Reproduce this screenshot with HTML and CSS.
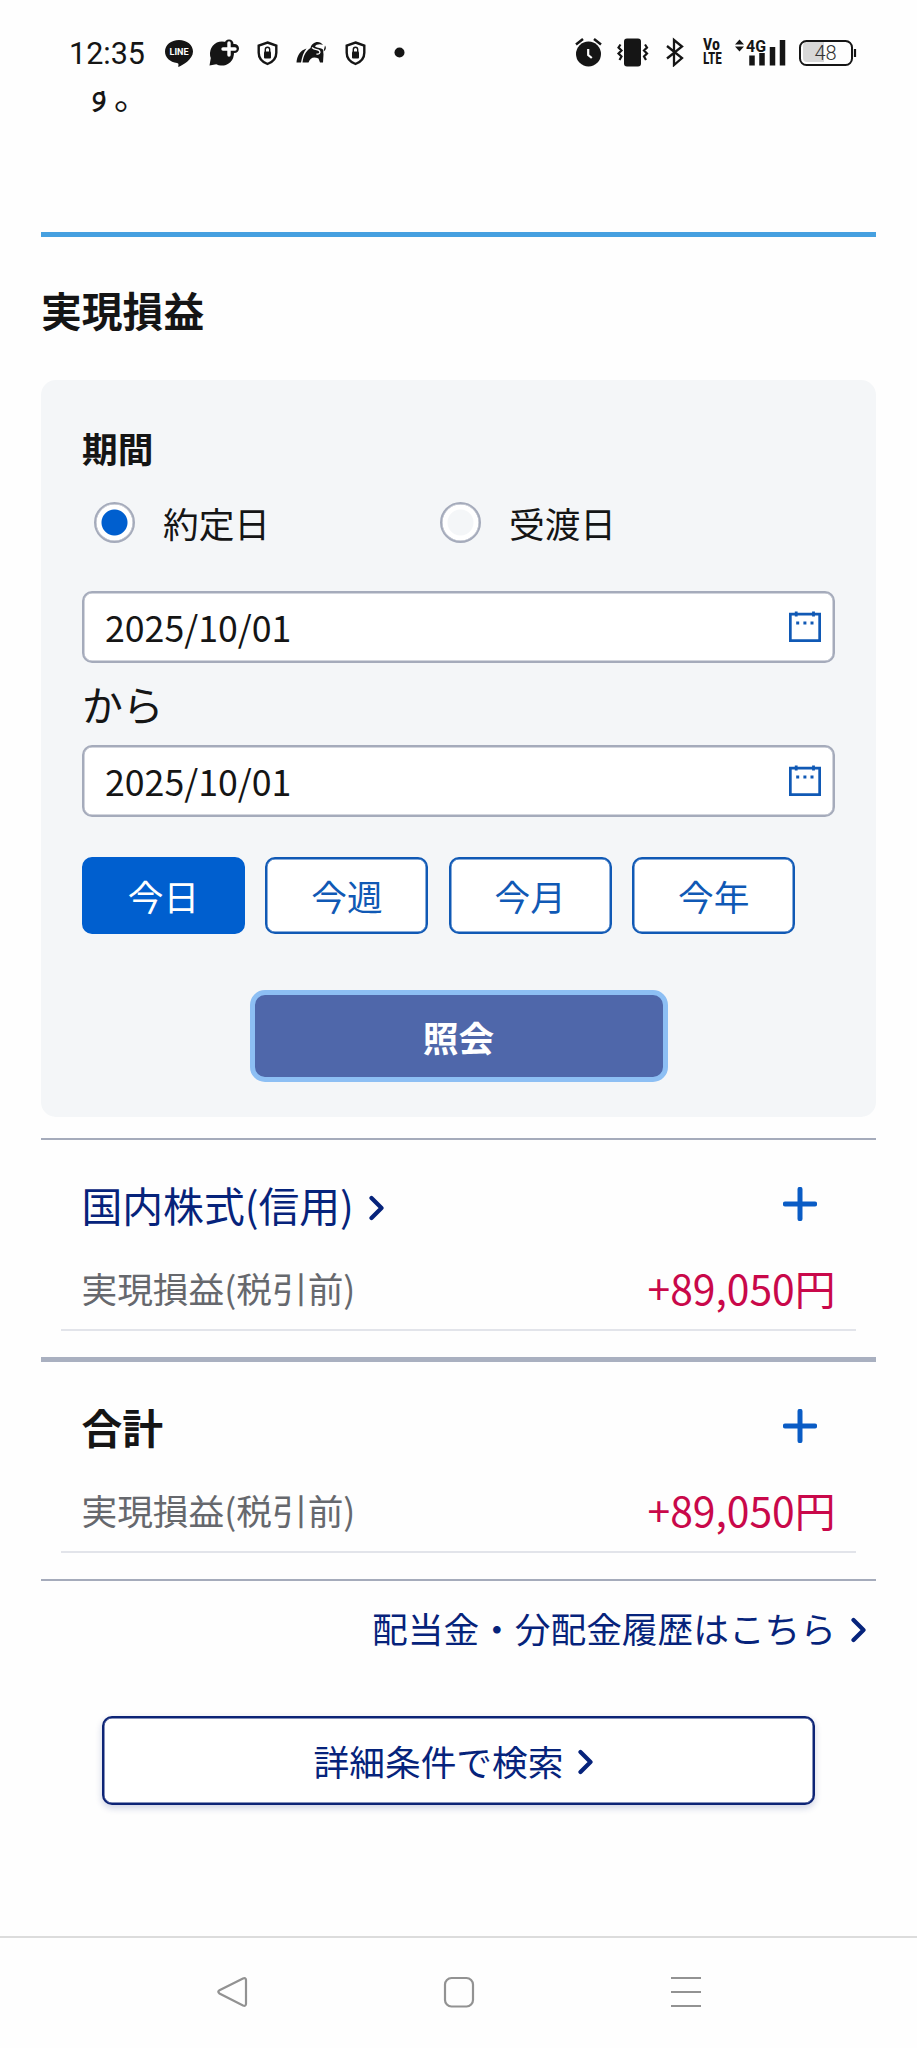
FILE: index.html
```html
<!DOCTYPE html>
<html lang="ja">
<head>
    <meta charset="UTF-8">
    <meta name="viewport" content="width=device-width, initial-scale=1.0">
    <title>実現損益</title>
    <link rel="stylesheet" href="styles.css">
</head>
<body>
    <header class="status-bar">
        <div class="status-left">
            <span class="time">12:35</span>
            <svg width="44" height="30" viewBox="0 0 44 30">
                <path fill="#151515" d="M22 3c-8 0-14 5-14 11.500c0 6 5 10.500 12 11.500c2 .3 1.500 1.500 1.300 4c4-1.500 14.700-7.500 14.700-15.500C36 8 30 3 22 3z"/>
                <text class="line-text" x="22" y="18.200" text-anchor="middle" textLength="19" lengthAdjust="spacingAndGlyphs">LINE</text>
            </svg>
            <svg width="44" height="30" viewBox="0 0 44 30">
                <path fill="#151515" d="M8.500 28.500l1.300-7.500a12 12 0 1 1 10 7.500q-2 0-4.500-1.200z"/>
                <path stroke="#151515" stroke-width="9" stroke-linecap="round" d="M28 7v9M23.500 11.500h10"/>
                <path stroke="#fff" stroke-width="3.400" stroke-linecap="round" d="M28 6v12M22 12h12"/>
            </svg>
            <svg width="44" height="30" viewBox="0 0 44 30">
                <path class="shield" d="M22.500 5.500l8.800 3.200v7c0 5.300-3.600 9.300-8.800 11.300c-5.200-2-8.800-6-8.800-11.300v-7z"/>
                <rect fill="#151515" x="19" y="14.500" width="7" height="7" rx="1"/>
                <path class="lock" d="M20.300 15v-2.500a2.200 2.200 0 0 1 4.400 0v2.500"/>
            </svg>
            <svg width="44" height="30" viewBox="0 0 44 30">
                <path fill="#151515" d="M7.500 25.500C8 19 11 13.500 17.500 11.500C14.500 15 13 20 12 25.500z"/>
                <path fill="#151515" d="M13.500 25.500c1-7 3-11 8-14.500c1-6 9-8.500 12.500-3c-3.500-1.500-7-.5-8 1.500c2.500 2 6 1 8 3l.5 5l-.5 8H31l-1.500-4c-5-2-8-1-10 4z"/>
                <path class="shine" d="M23 10.500c3 3 6 1.500 7.500 3.500s-1 3.500-3 3"/>
                <path fill="#151515" d="M36 8.500c1.500 2 1 4.500-1.500 6z"/>
            </svg>
            <svg width="44" height="30" viewBox="0 0 44 30">
                <path class="shield" d="M22.500 5.500l8.800 3.200v7c0 5.300-3.600 9.300-8.800 11.300c-5.200-2-8.800-6-8.800-11.300v-7z"/>
                <rect fill="#151515" x="19" y="14.500" width="7" height="7" rx="1"/>
                <path class="lock" d="M20.300 15v-2.500a2.200 2.200 0 0 1 4.400 0v2.500"/>
            </svg>
            <svg width="44" height="30" viewBox="0 0 44 30">
                <circle fill="#151515" cx="22.500" cy="15.500" r="5"/>
            </svg>
        </div>
        <div class="status-right">
            <svg width="28" height="30" viewBox="0 0 28 30">
                <circle fill="#151515" cx="13.500" cy="17" r="12.500"/>
                <path stroke="#151515" stroke-width="2.500" d="M1 7.500L8 2M19 2l7 5.500"/>
                <path fill="none" stroke="#fff" stroke-width="2.200" d="M13.200 12v6l3.600 3"/>
            </svg>
            <svg width="34" height="30" viewBox="0 0 34 30">
                <rect fill="#151515" x="9" y="1.500" width="17" height="28" rx="3"/>
                <path class="wave" d="M5.500 7.500l-2 3l3 3l-3 3l3 3l-2 3.500M30 7.500l2 3l-3 3l3 3l-3 3l2 3.500"/>
            </svg>
            <svg width="28" height="30" viewBox="0 0 28 30">
                <path class="bluetooth" d="M6 9l15 12l-8 7V3l8 6.500L6 21.500"/>
            </svg>
            <div class="volte"><span>Vo</span><span>LTE</span></div>
            <svg width="52" height="30" viewBox="0 0 52 30">
                <path fill="#151515" d="M0 7.500l4.500-5l4.500 5zM0 9.500h9l-4.500 5z"/>
                <text class="net" x="11" y="14.500" textLength="20" lengthAdjust="spacingAndGlyphs">4G</text>
                <path stroke="#151515" stroke-width="5.500" d="M17 18.500v10M27 16v12.500M37.500 10v18.500M47.500 3v25.500"/>
            </svg>
            <svg width="58" height="30" viewBox="0 0 58 30">
                <path fill="#d8d8d8" d="M8 5h17v20H8q-4 0-4-4V9q0-4 4-4z"/>
                <rect fill="none" stroke="#151515" stroke-width="2" x="1" y="4" width="52" height="24" rx="6.500"/>
                <path stroke="#151515" stroke-width="2.200" d="M56 12v8"/>
                <text class="percent" x="26.500" y="23.200" text-anchor="middle">48</text>
            </svg>
        </div>
    </header>

    <div class="scrolled"><p>す。</p></div>

    <main class="content">
        <h1>実現損益</h1>

        <form class="search">
            <h2>期間</h2>
            <div class="radios">
                <label><span class="radio checked"></span>約定日</label>
                <label><span class="radio"></span>受渡日</label>
            </div>

            <div class="date">
                <span>2025/10/01</span>
                <svg width="32" height="31" viewBox="0 0 32 31">
                    <path class="cal" d="M1.300 3.200h29.400v26.500H1.300zM7.200.5v5M24.500.5v5"/>
                    <path class="cal" d="M7.200 12h3M14.400 12h3M21.500 12h3"/>
                </svg>
            </div>
            <p class="from">から</p>
            <div class="date">
                <span>2025/10/01</span>
                <svg width="32" height="31" viewBox="0 0 32 31">
                    <path class="cal" d="M1.300 3.200h29.400v26.500H1.300zM7.200.5v5M24.500.5v5"/>
                    <path class="cal" d="M7.200 12h3M14.400 12h3M21.500 12h3"/>
                </svg>
            </div>

            <div class="ranges">
                <button type="button" class="active">今日</button>
                <button type="button">今週</button>
                <button type="button">今月</button>
                <button type="button">今年</button>
            </div>

            <button type="button" class="submit">照会</button>
        </form>

        <section class="result">
            <div class="result-head">
                <a>国内株式(信用)
                    <svg class="chevron" width="16" height="26" viewBox="0 0 16 26"><path d="M2.500 3L12.500 13L2.500 23"/></svg>
                </a>
                <svg class="plus" width="34" height="34" viewBox="0 0 34 34"><path d="M17 2.300v29.400M2.300 17h29.400"/></svg>
            </div>
            <div class="result-row">
                <span class="label">実現損益(税引前)</span>
                <span class="amount">+89,050円</span>
            </div>
        </section>

        <section class="result total">
            <div class="result-head">
                <strong>合計</strong>
                <svg class="plus" width="34" height="34" viewBox="0 0 34 34"><path d="M17 2.300v29.400M2.300 17h29.400"/></svg>
            </div>
            <div class="result-row">
                <span class="label">実現損益(税引前)</span>
                <span class="amount">+89,050円</span>
            </div>
        </section>

        <a class="history">配当金・分配金履歴はこちら
            <svg class="chevron" width="16" height="26" viewBox="0 0 16 26"><path d="M2.500 3L12.500 13L2.500 23"/></svg>
        </a>

        <button type="button" class="detail">詳細条件で検索
            <svg class="chevron" width="16" height="26" viewBox="0 0 16 26"><path d="M2.500 3L12.500 13L2.500 23"/></svg>
        </button>
    </main>

    <nav class="nav-bar">
        <svg width="32" height="32" viewBox="0 0 32 32"><path d="M27 2.500L3.500 14.200q-2.500 1.600 0 3.300L27 29.500q2.800 1 3-1.500V4q-.3-2.600-3-1.500z"/></svg>
        <svg width="32" height="32" viewBox="0 0 32 32"><rect x="2" y="2" width="28" height="28.500" rx="6.500"/></svg>
        <svg width="32" height="32" viewBox="0 0 32 32"><path d="M1 2h30M1 16h30M1 30h30"/></svg>
    </nav>
</body>
</html>
```

FILE: styles.css
```css
* {
    box-sizing: border-box;
}

body {
    display: flex;
    flex-direction: column;
    height: 2048px;
    margin: 0;
    background: #fefefe;
    color: #151515;
    font-family: 'Noto Sans CJK JP', sans-serif;
    font-size: 35.7px;
}

h1, h2, p {
    margin: 0;
}

svg {
    display: block;
    flex: none;
}

button {
    padding: 0;
    font: inherit;
}

/* status bar */
.status-bar {
    display: flex;
    justify-content: space-between;
    height: 91px;
    padding: 37px 60px 0 69px;
}

.status-left,
.status-right {
    display: flex;
    height: 30px;
}

.status-right {
    gap: 12px;
}

.time {
    width: 88px;
    font: 30.5px/33px Roboto, sans-serif;
}

.line-text {
    font: bold 9px Roboto, sans-serif;
    fill: #fff;
}

.shield {
    fill: none;
    stroke: #151515;
    stroke-width: 2.4;
}

.lock {
    fill: none;
    stroke: #151515;
    stroke-width: 1.4;
}

.shine {
    fill: none;
    stroke: #fff;
    stroke-width: 1.3;
}

.wave {
    fill: none;
    stroke: #151515;
    stroke-width: 2.2;
}

.bluetooth {
    fill: none;
    stroke: #151515;
    stroke-width: 2.3;
}

.volte {
    display: flex;
    flex-direction: column;
    width: 22px;
    padding: 1px 0 0 2px;
    font: bold 16px/14px 'Roboto Condensed', Roboto, sans-serif;
}

.volte span {
    transform: scaleX(0.84);
    transform-origin: left;
}

.volte span:first-child {
    transform: scaleX(1);
}

.net {
    font: bold 17px Roboto, sans-serif;
    fill: #151515;
}

.percent {
    font: 300 20px Roboto, sans-serif;
    fill: #333;
}

/* line of text scrolled under the status bar */
.scrolled {
    height: 141px;
    padding-left: 82px;
    overflow: hidden;
}

.scrolled p {
    margin-top: -16px;
    font-size: 35.7px;
    line-height: 40px;
}

.content {
    flex: 1;
    margin: 0 41px;
    border-top: 5px solid #46a0e0;
}

h1 {
    margin: 42px 0 39px;
    font-size: 40.8px;
    line-height: 62px;
}

/* search form */
.search {
    height: 737px;
    padding: 41px 41px 0;
    background: #f4f6f8;
    border-radius: 15px;
}

h2 {
    font-size: 35.7px;
    line-height: 53px;
}

.radios {
    display: flex;
    height: 41px;
    margin: 28px 0 48px 12px;
}

.radios label {
    display: flex;
    width: 346px;
    gap: 28px;
    line-height: 42px;
}

.radio {
    width: 41px;
    height: 41px;
    border: 2px solid #a5abbb;
    border-radius: 50%;
    background: radial-gradient(circle, #f4f6f8 12.5px, #fff 13.5px);
    box-shadow: inset 0 0 0 0.5px #a5abbb;
}

.radio.checked {
    background: radial-gradient(circle, #005fcf 12.5px, #fff 13.5px);
}

.date {
    display: flex;
    align-items: center;
    justify-content: space-between;
    height: 72px;
    padding: 0 12px 2px 21px;
    background: #fff;
    border: 2px solid #a5abbb;
    border-radius: 10px;
    box-shadow: inset 0 0 0 0.5px #a5abbb;
}

.cal {
    fill: none;
    stroke: #1059b5;
    stroke-width: 2.8;
}

.from {
    height: 82px;
    font-size: 40.8px;
    line-height: 82px;
}

.ranges {
    display: flex;
    gap: 20.4px;
    margin: 40px 0 56px;
}

.ranges button {
    width: 163px;
    height: 77px;
    background: #fff;
    border: 2px solid #1059b5;
    border-radius: 10px;
    box-shadow: inset 0 0 0 0.5px #1059b5;
    color: #1059b5;
}

.ranges .active {
    background: #005fcf;
    border-color: #005fcf;
    box-shadow: none;
    color: #fff;
}

.submit {
    display: block;
    width: 418px;
    height: 92px;
    margin: 0 auto;
    background: #4f67aa;
    border: 5px solid #8dbff4;
    border-radius: 15px;
    color: #fff;
    font-weight: bold;
}

/* results */
.result {
    height: 219px;
    margin-top: 21px;
    padding: 0 20px;
    border-top: 2px solid #a5abbb;
}

.result.total {
    height: 224px;
    margin-top: 0;
    border-top: 5px solid #a9b0c0;
    border-bottom: 2px solid #a5abbb;
}

.result-head {
    display: flex;
    align-items: center;
    justify-content: space-between;
    height: 99px;
    padding: 31px 39px 0 20.5px;
    font-size: 40.8px;
    line-height: 68px;
}

.result-head a {
    display: flex;
    align-items: center;
    gap: 15px;
    color: #06237b;
}

.result-head .chevron {
    margin-top: 5px;
}

.chevron {
    fill: none;
    stroke: #06237b;
    stroke-width: 4.2;
    stroke-linecap: round;
    stroke-linejoin: round;
}

.plus {
    margin-top: -3px;
    stroke: #0a5cc5;
    stroke-width: 5;
    stroke-linecap: round;
}

.result-row {
    display: flex;
    justify-content: space-between;
    height: 92px;
    padding: 17px 20.5px 0;
    border-bottom: 2px solid #e2e4ea;
    line-height: 64px;
}

.label {
    color: #66686d;
}

.amount {
    color: #c9084a;
    font-size: 40.8px;
}

.history {
    display: flex;
    align-items: center;
    justify-content: flex-end;
    gap: 15px;
    margin: 18px 9px 0 0;
    color: #06237b;
    line-height: 58px;
}

.history .chevron {
    margin-top: 3px;
}

.detail {
    display: flex;
    align-items: center;
    justify-content: center;
    gap: 15px;
    width: 713px;
    height: 89px;
    margin: 59px auto 0;
    padding-right: 9px;
    background: #fff;
    border: 2px solid #0d2476;
    border-radius: 10px;
    box-shadow: inset 0 0 0 0.5px #0d2476, 0 3px 7px rgba(13, 36, 118, 0.2);
    color: #06237b;
}

.detail .chevron {
    margin-top: 2px;
}

/* android navigation */
.nav-bar {
    display: flex;
    justify-content: center;
    gap: 195px;
    height: 112px;
    padding: 38px 0 0 1px;
    border-top: 2px solid #dcdcdc;
    fill: none;
    stroke: #929292;
    stroke-width: 2.2;
}
```
